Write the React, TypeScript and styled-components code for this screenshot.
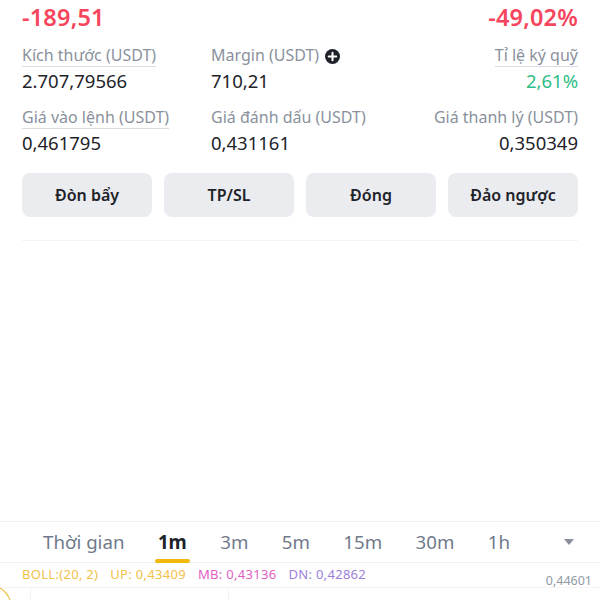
import React from "react";
import styled, { createGlobalStyle } from "styled-components";

const GlobalStyle = createGlobalStyle`
  html, body {
    margin: 0;
    padding: 0;
    background: #ffffff;
  }
  body {
    font-family: "Noto Sans", "Open Sans", Arial, sans-serif;
    color: #1e2329;
  }
`;

const Screen = styled.div`
  width: 600px;
  height: 600px;
  overflow: hidden;
  display: flex;
  flex-direction: column;
`;

const Position = styled.section`
  padding: 0 22px;
`;

const PnlRow = styled.div`
  display: flex;
  justify-content: space-between;
  align-items: center;
  height: 34px;
`;

const PnlValue = styled.span`
  font-size: 23.5px;
  font-weight: 600;
  color: #f6465d;
  letter-spacing: 0.2px;
`;

const InfoGrid = styled.div`
  display: grid;
  grid-template-columns: 189px 1fr auto;
  row-gap: 14px;
  margin-top: 11px;
`;

const Cell = styled.div<{ $right?: boolean }>`
  display: flex;
  flex-direction: column;
  align-items: ${(p) => (p.$right ? "flex-end" : "flex-start")};
  gap: 1px;
`;

const LabelRow = styled.div`
  display: flex;
  align-items: center;
  gap: 6px;
  height: 22px;
`;

const Label = styled.span<{ $dashed?: boolean }>`
  font-size: 16px;
  color: #8a919c;
  line-height: 21px;
  border-bottom: 1px solid ${(p) => (p.$dashed ? "#d9dce1" : "transparent")};
`;

const Value = styled.span<{ $tone?: "green" }>`
  font-size: 18.5px;
  line-height: 25px;
  color: ${(p) => (p.$tone === "green" ? "#2ebd85" : "#1e2329")};
`;

const ActionRow = styled.div`
  display: grid;
  grid-template-columns: repeat(4, 1fr);
  gap: 12px;
  margin-top: 18px;
`;

const ActionButton = styled.button`
  height: 44px;
  border: none;
  border-radius: 8px;
  background: #eaecef;
  font-family: inherit;
  font-size: 16px;
  font-weight: 600;
  color: #1e2329;
`;

const Divider = styled.hr`
  margin: 23px 0 0;
  border: none;
  border-top: 1px solid #f3f4f5;
`;

const Spacer = styled.div`
  flex: 1;
`;

const TabBar = styled.div`
  height: 40px;
  border-top: 1px solid #f0f1f2;
  border-bottom: 1px solid #f0f1f2;
  display: flex;
  align-items: center;
  padding-left: 43px;
  padding-right: 26px;
  gap: 33.4px;
`;

const Tab = styled.span<{ $active?: boolean }>`
  position: relative;
  font-size: 18.7px;
  font-weight: ${(p) => (p.$active ? 700 : 400)};
  color: ${(p) => (p.$active ? "#1e2329" : "#707a8a")};
  line-height: 24px;

  ${(p) =>
    p.$active &&
    `
    &::after {
      content: "";
      position: absolute;
      left: -3px;
      right: -3px;
      bottom: -9px;
      height: 4px;
      border-radius: 2px;
      background: #f0b90b;
    }
  `}
`;

const Caret = styled.span`
  margin-left: auto;
  width: 0;
  height: 0;
  border-left: 5px solid transparent;
  border-right: 5px solid transparent;
  border-top: 6px solid #8a919c;
`;

const Chart = styled.div`
  position: relative;
  height: 37px;
`;

const Legend = styled.div`
  display: flex;
  align-items: center;
  gap: 12px;
  padding: 3px 0 0 22px;
  font-size: 13px;
  line-height: 17px;
  letter-spacing: 0.3px;
`;

const LegendItem = styled.span<{ $color: string }>`
  color: ${(p) => p.$color};
`;

const AxisPrice = styled.span`
  position: absolute;
  right: 8px;
  top: 9px;
  font-size: 12.5px;
  color: #929aa5;
`;

const ChartArt = styled.svg`
  position: absolute;
  left: 0;
  bottom: 0;
`;

const PlusIcon = () => (
  <svg width="15" height="15" viewBox="0 0 16 16">
    <circle cx="8" cy="8" r="8" fill="#1e2329" />
    <path d="M8 4v8M4 8h8" stroke="#fff" strokeWidth="2.2" strokeLinecap="round" />
  </svg>
);

const tabs = ["1m", "3m", "5m", "15m", "30m", "1h"];
const actions = ["Đòn bẩy", "TP/SL", "Đóng", "Đảo ngược"];

export default function App() {
  return (
    <Screen>
      <GlobalStyle />
      <Position>
        <PnlRow>
          <PnlValue>-189,51</PnlValue>
          <PnlValue>-49,02%</PnlValue>
        </PnlRow>

        <InfoGrid>
          <Cell>
            <LabelRow>
              <Label $dashed>Kích thước (USDT)</Label>
            </LabelRow>
            <Value>2.707,79566</Value>
          </Cell>
          <Cell>
            <LabelRow>
              <Label>Margin (USDT)</Label>
              <PlusIcon />
            </LabelRow>
            <Value>710,21</Value>
          </Cell>
          <Cell $right>
            <LabelRow>
              <Label $dashed>Tỉ lệ ký quỹ</Label>
            </LabelRow>
            <Value $tone="green">2,61%</Value>
          </Cell>

          <Cell>
            <LabelRow>
              <Label $dashed>Giá vào lệnh (USDT)</Label>
            </LabelRow>
            <Value>0,461795</Value>
          </Cell>
          <Cell>
            <LabelRow>
              <Label>Giá đánh dấu (USDT)</Label>
            </LabelRow>
            <Value>0,431161</Value>
          </Cell>
          <Cell $right>
            <LabelRow>
              <Label>Giá thanh lý (USDT)</Label>
            </LabelRow>
            <Value>0,350349</Value>
          </Cell>
        </InfoGrid>

        <ActionRow>
          {actions.map((a) => (
            <ActionButton key={a}>{a}</ActionButton>
          ))}
        </ActionRow>

        <Divider />
      </Position>

      <Spacer />

      <TabBar>
        <Tab>Thời gian</Tab>
        {tabs.map((t) => (
          <Tab key={t} $active={t === "1m"}>
            {t}
          </Tab>
        ))}
        <Caret />
      </TabBar>

      <Chart>
        <Legend>
          <LegendItem $color="#f0c14b">BOLL:(20, 2)</LegendItem>
          <LegendItem $color="#f0c14b">UP: 0,43409</LegendItem>
          <LegendItem $color="#e05fc4">MB: 0,43136</LegendItem>
          <LegendItem $color="#9b7fd9">DN: 0,42862</LegendItem>
        </Legend>
        <AxisPrice>0,44601</AxisPrice>
        <ChartArt width="600" height="14" viewBox="0 0 600 14">
          <line x1="0" y1="1.5" x2="600" y2="1.5" stroke="#f2f3f4" />
          <line x1="30.5" y1="2" x2="30.5" y2="14" stroke="#f2f3f4" />
          <line x1="228.5" y1="2" x2="228.5" y2="14" stroke="#f2f3f4" />
          <path d="M0 2 Q7 6 10 14" fill="none" stroke="#f0c14b" strokeWidth="1.2" />
        </ChartArt>
      </Chart>
    </Screen>
  );
}
